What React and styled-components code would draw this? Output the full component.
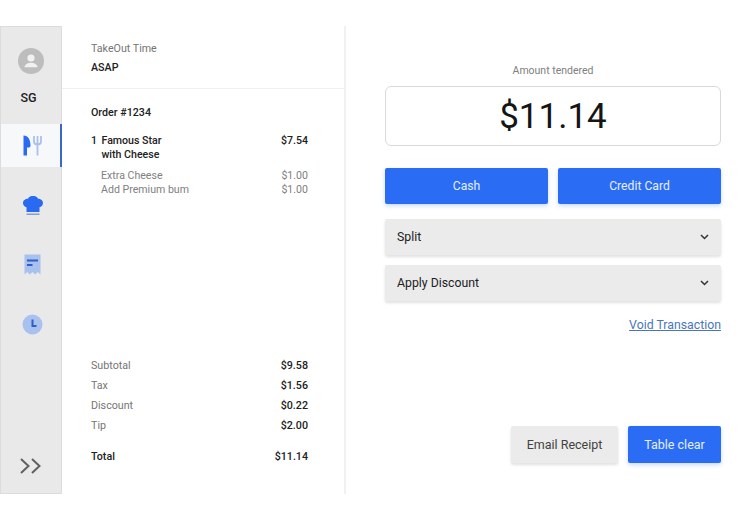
import React from "react";
import styled, { createGlobalStyle } from "styled-components";

const totals = [
  ["Subtotal", "$9.58"],
  ["Tax", "$1.56"],
  ["Discount", "$0.22"],
  ["Tip", "$2.00"],
];

export default function App() {
  return (
    <>
      <GlobalStyle />
      <Page>
        <Sidebar>
          <Avatar>
            <svg width="26" height="26" viewBox="0 0 26 26">
              <circle cx="13" cy="13" r="13" fill="#bdbdbd" />
              <circle cx="13" cy="10" r="3.6" fill="#f1f1f1" />
              <path d="M6.5 19.2c0-3 4.2-4.4 6.5-4.4s6.5 1.4 6.5 4.4z" fill="#f1f1f1" />
            </svg>
          </Avatar>
          <Initials>SG</Initials>
          <NavItem $active>
            <svg width="20" height="21" viewBox="0 0 20 21">
              <path d="M0.5 0.5C5 0.5 7.5 4.5 7.5 10.5c0 1.5-.8 2-2 2H4V20.5H0.5z" fill="#2a6af2" />
              <path
                d="M11 1v5.5c0 2 1.5 3 3.5 3s3.5-1 3.5-3V1M14.5 1v19.5"
                fill="none"
                stroke="#a9c1ee"
                strokeWidth="1.8"
              />
            </svg>
          </NavItem>
          <NavItem>
            <svg width="22" height="21" viewBox="0 0 22 21">
              <path
                d="M6 3.7C7 1.5 9 1 11 1s4 .5 5 2.7c2.8 0 5 1.8 5 4.3 0 2.2-1.500 3.800-3.500 4.300V17h-13v-4.700C2.500 11.800 1 10.200 1 8c0-2.500 2.200-4.300 5-4.300z"
                fill="#2a6af2"
              />
              <rect x="4.5" y="18.5" width="13" height="1.5" fill="#7f9fd8" />
            </svg>
          </NavItem>
          <NavItem>
            <svg width="17" height="21" viewBox="0 0 17 21">
              <path d="M0.5 0.5h16v20l-2.700-2.500-2.600 2.500-2.700-2.500-2.700 2.500-2.600-2.500-2.700 2.500z" fill="#a9c1ee" />
              <rect x="3" y="5.5" width="11" height="2" fill="#2f5fc4" />
              <rect x="3" y="10" width="5.5" height="2" fill="#2f5fc4" />
            </svg>
          </NavItem>
          <NavItem>
            <svg width="21" height="21" viewBox="0 0 21 21">
              <circle cx="10.5" cy="10.5" r="10" fill="#a9c1ee" />
              <path d="M10.5 5.5V12h4" fill="none" stroke="#2f5fc4" strokeWidth="2" />
            </svg>
          </NavItem>
          <Expand>
            <svg width="24" height="18" viewBox="0 0 24 18">
              <path d="M2 2l7.5 7L2 16M13 2l7.5 7L13 16" fill="none" stroke="#616161" strokeWidth="2" />
            </svg>
          </Expand>
        </Sidebar>

        <OrderPanel>
          <OrderHeader>
            <MutedLabel>TakeOut Time</MutedLabel>
            <Strong>ASAP</Strong>
          </OrderHeader>
          <OrderBody>
            <OrderTitle>Order #1234</OrderTitle>
            <ItemRow>
              <Qty>1</Qty>
              <ItemName>
                Famous Star
                <br />
                with Cheese
              </ItemName>
              <span>$7.54</span>
            </ItemRow>
            <ModRow>
              <span>Extra Cheese</span>
              <span>$1.00</span>
            </ModRow>
            <ModRow>
              <span>Add Premium bum</span>
              <span>$1.00</span>
            </ModRow>
            <Totals>
              {totals.map(([label, value]) => (
                <TotalRow key={label}>
                  <span>{label}</span>
                  <b>{value}</b>
                </TotalRow>
              ))}
              <GrandTotal>
                <span>Total</span>
                <span>$11.14</span>
              </GrandTotal>
            </Totals>
          </OrderBody>
        </OrderPanel>

        <PaymentPanel>
          <TenderedLabel>Amount tendered</TenderedLabel>
          <AmountBox>$11.14</AmountBox>
          <PayButtons>
            <PrimaryButton>Cash</PrimaryButton>
            <PrimaryButton>Credit Card</PrimaryButton>
          </PayButtons>
          <Dropdown $first>
            Split
            <Chevron />
          </Dropdown>
          <Dropdown>
            Apply Discount
            <Chevron />
          </Dropdown>
          <VoidLink href="#">Void Transaction</VoidLink>
          <Actions>
            <SecondaryButton>Email Receipt</SecondaryButton>
            <TableClear>Table clear</TableClear>
          </Actions>
        </PaymentPanel>
      </Page>
    </>
  );
}

function Chevron() {
  return (
    <svg width="9" height="6" viewBox="0 0 9 6">
      <path d="M1 1l3.5 3.5L8 1" fill="none" stroke="#333" strokeWidth="1.5" />
    </svg>
  );
}

const GlobalStyle = createGlobalStyle`
  html, body {
    margin: 0;
    background: #fff;
  }
  body {
    font-family: Roboto, "Liberation Sans", sans-serif;
    color: #212121;
  }
`;

const Page = styled.div`
  display: flex;
  align-items: flex-start;
  width: 751px;
  height: 515px;
  padding-top: 26px;
  box-sizing: border-box;
`;

const Sidebar = styled.nav`
  display: flex;
  flex-direction: column;
  align-items: stretch;
  width: 62px;
  height: 468px;
  box-sizing: border-box;
  background: #e9e9e9;
  border: 1px solid #dcdcdc;
`;

const Avatar = styled.div`
  display: flex;
  justify-content: center;
  margin-top: 21px;
  height: 26px;
`;

const Initials = styled.div`
  margin: 16px 5px 0 0;
  height: 16px;
  line-height: 16px;
  text-align: center;
  font-size: 12.5px;
  font-weight: 500;
  color: #212121;
`;

const NavItem = styled.div`
  display: flex;
  align-items: center;
  justify-content: center;
  height: 43px;
  box-sizing: border-box;
  padding-left: 5px;
  margin-bottom: 16.5px;
  background: ${(p) => (p.$active ? "#f7f8fa" : "transparent")};
  border-right: 2px solid ${(p) => (p.$active ? "#3c66c8" : "transparent")};
  ${(p) => p.$active && "margin-top: 18px; margin-right: -1px;"}
`;

const Expand = styled.div`
  display: flex;
  justify-content: center;
  margin-top: auto;
  padding-bottom: 18px;
`;

const OrderPanel = styled.section`
  display: flex;
  flex-direction: column;
  width: 284px;
  height: 468px;
  box-sizing: border-box;
  border-right: 2px solid #f1f1f1;
`;

const OrderHeader = styled.header`
  display: flex;
  flex-direction: column;
  height: 63px;
  box-sizing: border-box;
  padding: 16px 0 0 29px;
  border-bottom: 1px solid #efefef;
`;

const MutedLabel = styled.div`
  font-size: 10.7px;
  line-height: 14px;
  color: #757575;
`;

const Strong = styled.div`
  margin-top: 5px;
  font-size: 10.7px;
  line-height: 14px;
  font-weight: 500;
  color: #212121;
`;

const OrderBody = styled.div`
  display: flex;
  flex-direction: column;
  flex: 1;
  padding: 17px 36px 28px 29px;
`;

const OrderTitle = styled.div`
  font-size: 10.7px;
  line-height: 14px;
  font-weight: 500;
  margin-bottom: 14px;
`;

const ItemRow = styled.div`
  display: flex;
  font-size: 10.6px;
  line-height: 14px;
  font-weight: 500;
  margin-bottom: 7px;
`;

const Qty = styled.span`
  width: 10.5px;
`;

const ItemName = styled.span`
  flex: 1;
`;

const ModRow = styled.div`
  display: flex;
  justify-content: space-between;
  padding-left: 10px;
  font-size: 10.6px;
  line-height: 14px;
  color: #808080;
`;

const Totals = styled.div`
  display: flex;
  flex-direction: column;
  margin-top: auto;
`;

const TotalRow = styled.div`
  display: flex;
  justify-content: space-between;
  height: 20px;
  align-items: center;
  font-size: 10.7px;
  color: #757575;
  b {
    font-weight: 500;
    color: #212121;
  }
`;

const GrandTotal = styled.div`
  display: flex;
  justify-content: space-between;
  align-items: center;
  height: 20px;
  margin-top: 11px;
  font-size: 10.7px;
  font-weight: 500;
  color: #212121;
`;

const PaymentPanel = styled.section`
  display: flex;
  flex-direction: column;
  width: 336px;
  height: 468px;
  margin-left: 39px;
`;

const TenderedLabel = styled.div`
  margin-top: 38px;
  text-align: center;
  font-size: 10.5px;
  line-height: 14px;
  color: #808080;
`;

const AmountBox = styled.div`
  display: flex;
  align-items: center;
  justify-content: center;
  height: 60px;
  margin-top: 8px;
  box-sizing: border-box;
  border: 1px solid #d9d9d9;
  border-radius: 6px;
  font-size: 35px;
  font-weight: 450;
  color: #151515;
`;

const PayButtons = styled.div`
  display: grid;
  grid-template-columns: 1fr 1fr;
  gap: 10px;
  margin-top: 22px;
`;

const PrimaryButton = styled.button`
  height: 36px;
  padding: 0;
  border: none;
  border-radius: 2px;
  background: #2a6df4;
  color: #e6eefd;
  font: 400 12.2px Roboto, sans-serif;
  box-shadow: 0 2px 4px rgba(42, 109, 244, 0.25);
`;

const Dropdown = styled.div`
  display: flex;
  align-items: center;
  justify-content: space-between;
  height: 36px;
  margin-top: ${(p) => (p.$first ? "15px" : "10px")};
  padding: 0 12px;
  border-radius: 2px;
  background: #ebebeb;
  font-size: 12.3px;
  color: #212121;
  box-shadow: 0 2px 3px rgba(0, 0, 0, 0.12);
`;

const VoidLink = styled.a`
  align-self: flex-end;
  margin-top: 17px;
  font-size: 12.3px;
  line-height: 14px;
  color: #4a76b8;
  text-decoration: underline;
`;

const Actions = styled.div`
  display: flex;
  justify-content: flex-end;
  gap: 10px;
  margin-top: auto;
  margin-bottom: 31px;
`;

const SecondaryButton = styled.button`
  width: 107px;
  height: 37px;
  padding: 0;
  border: none;
  border-radius: 2px;
  background: #ebebeb;
  color: #424242;
  font: 400 12.5px Roboto, sans-serif;
  box-shadow: 0 2px 3px rgba(0, 0, 0, 0.12);
`;

const TableClear = styled(PrimaryButton)`
  width: 93px;
  height: 37px;
  font-size: 12.5px;
`;
